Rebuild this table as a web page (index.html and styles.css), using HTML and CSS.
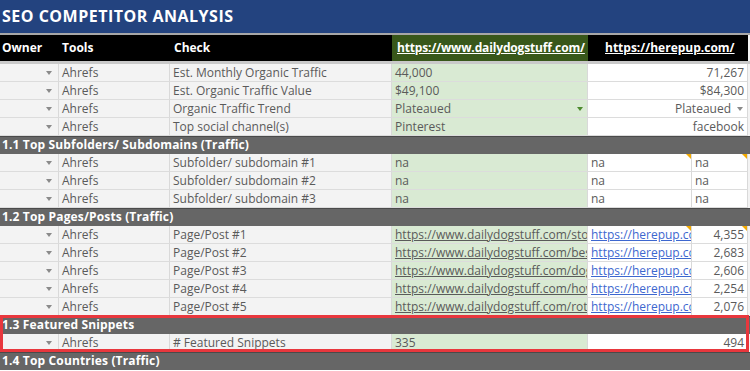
FILE: index.html
```html
<!DOCTYPE html>
<html>
<head>
<meta charset="utf-8">
<link rel="stylesheet" href="styles.css">
</head>
<body>
<div class="sheet">
  <div class="title">SEO COMPETITOR ANALYSIS</div>
  <div class="row head">
    <div class="c ha">Owner</div>
    <div class="c b">Tools</div>
    <div class="c cc">Check</div>
    <div class="c d hd"><span class="ul">https://www.dailydogstuff.com/</span></div>
    <div class="c ef hd"><span class="ul">https://herepup.com/</span></div>
    <div class="c z"></div>
  </div>

  <div class="row">
    <div class="c a gray"><span class="arr"></span></div>
    <div class="c b gray">Ahrefs</div>
    <div class="c cc gray">Est. Monthly Organic Traffic</div>
    <div class="c d green">44,000</div>
    <div class="c ef white right">71,267</div>
    <div class="c z"></div>
  </div>
  <div class="row">
    <div class="c a gray"><span class="arr"></span></div>
    <div class="c b gray">Ahrefs</div>
    <div class="c cc gray">Est. Organic Traffic Value</div>
    <div class="c d green">$49,100</div>
    <div class="c ef white right">$84,300</div>
    <div class="c z"></div>
  </div>
  <div class="row">
    <div class="c a gray"><span class="arr"></span></div>
    <div class="c b gray">Ahrefs</div>
    <div class="c cc gray">Organic Traffic Trend</div>
    <div class="c d green split">Plateaued<span class="arr garr"></span></div>
    <div class="c ef white right">Plateaued<span class="arr sarr"></span></div>
    <div class="c z"></div>
  </div>
  <div class="row">
    <div class="c a gray"><span class="arr"></span></div>
    <div class="c b gray">Ahrefs</div>
    <div class="c cc gray">Top social channel(s)</div>
    <div class="c d green">Pinterest</div>
    <div class="c ef white right">facebook</div>
    <div class="c z"></div>
  </div>

  <div class="section">1.1 Top Subfolders/ Subdomains (Traffic)</div>
  <div class="row">
    <div class="c a gray"><span class="arr"></span></div>
    <div class="c b gray">Ahrefs</div>
    <div class="c cc gray">Subfolder/ subdomain #1</div>
    <div class="c d green">na</div>
    <div class="c e white note">na</div>
    <div class="c f white note">na</div>
    <div class="c z"></div>
  </div>
  <div class="row">
    <div class="c a gray"><span class="arr"></span></div>
    <div class="c b gray">Ahrefs</div>
    <div class="c cc gray">Subfolder/ subdomain #2</div>
    <div class="c d green">na</div>
    <div class="c e white">na</div>
    <div class="c f white">na</div>
    <div class="c z"></div>
  </div>
  <div class="row">
    <div class="c a gray"><span class="arr"></span></div>
    <div class="c b gray">Ahrefs</div>
    <div class="c cc gray">Subfolder/ subdomain #3</div>
    <div class="c d green">na</div>
    <div class="c e white">na</div>
    <div class="c f white">na</div>
    <div class="c z"></div>
  </div>

  <div class="section">1.2 Top Pages/Posts (Traffic)</div>
  <div class="row">
    <div class="c a gray"><span class="arr"></span></div>
    <div class="c b gray">Ahrefs</div>
    <div class="c cc gray">Page/Post #1</div>
    <div class="c d green"><span class="dlink">https://www.dailydogstuff.com/stop-dog-barking/</span></div>
    <div class="c e white note"><span class="blink">https://herepup.com/best-dog-food/</span></div>
    <div class="c f white note right">4,355</div>
    <div class="c z"></div>
  </div>
  <div class="row">
    <div class="c a gray"><span class="arr"></span></div>
    <div class="c b gray">Ahrefs</div>
    <div class="c cc gray">Page/Post #2</div>
    <div class="c d green"><span class="dlink">https://www.dailydogstuff.com/best-dog-beds/</span></div>
    <div class="c e white"><span class="blink">https://herepup.com/dog-names/</span></div>
    <div class="c f white right">2,683</div>
    <div class="c z"></div>
  </div>
  <div class="row">
    <div class="c a gray"><span class="arr"></span></div>
    <div class="c b gray">Ahrefs</div>
    <div class="c cc gray">Page/Post #3</div>
    <div class="c d green"><span class="dlink">https://www.dailydogstuff.com/dog-breeds/</span></div>
    <div class="c e white"><span class="blink">https://herepup.com/puppy-care/</span></div>
    <div class="c f white right">2,606</div>
    <div class="c z"></div>
  </div>
  <div class="row">
    <div class="c a gray"><span class="arr"></span></div>
    <div class="c b gray">Ahrefs</div>
    <div class="c cc gray">Page/Post #4</div>
    <div class="c d green"><span class="dlink">https://www.dailydogstuff.com/how-to-train/</span></div>
    <div class="c e white"><span class="blink">https://herepup.com/dog-toys/</span></div>
    <div class="c f white right">2,254</div>
    <div class="c z"></div>
  </div>
  <div class="row">
    <div class="c a gray"><span class="arr"></span></div>
    <div class="c b gray">Ahrefs</div>
    <div class="c cc gray">Page/Post #5</div>
    <div class="c d green"><span class="dlink">https://www.dailydogstuff.com/rottweiler/</span></div>
    <div class="c e white"><span class="blink">https://herepup.com/dog-health/</span></div>
    <div class="c f white right">2,076</div>
    <div class="c z"></div>
  </div>

  <div class="highlight">
    <div class="section">1.3 Featured Snippets</div>
    <div class="row">
      <div class="c a gray"><span class="arr"></span></div>
      <div class="c b gray">Ahrefs</div>
      <div class="c cc gray"># Featured Snippets</div>
      <div class="c d green">335</div>
      <div class="c ef white right">494</div>
      <div class="c z"></div>
    </div>
  </div>

  <div class="section">1.4 Top Countries (Traffic)</div>
</div>
</body>
</html>
```

FILE: styles.css
```css
* { box-sizing: border-box; }
html, body { margin: 0; padding: 0; background: #ffffff; }
body {
  font-family: "Open Sans", "Liberation Sans", sans-serif;
  font-size: 12px;
  color: #5a5a5a;
  width: 750px;
  height: 371px;
  overflow: hidden;
}
.sheet { width: 750px; }
.title {
  height: 35px;
  background: #23437f;
  border-bottom: 2px solid #a7a7a7;
  color: #ffffff;
  font-weight: 700;
  font-size: 16px;
  padding-left: 2px;
  line-height: 32px;
  letter-spacing: 0.5px;
}
.row {
  display: grid;
  grid-template-columns: 59px 111px 222px 196px 104px 56px 2px;
  height: 18px;
}
.row.head {
  height: 29px;
  background: #000000;
  border-bottom: 3px solid #c9c9c9;
  color: #ffffff;
  font-weight: 700;
}
.c {
  overflow: hidden;
  white-space: nowrap;
  padding-left: 3px;
  line-height: 17px;
  border-right: 1px solid #d9d9d9;
  border-bottom: 1px solid #dcdcdc;
  position: relative;
}
.head .c { line-height: 25px; border: none; padding-left: 2px; }
.head .b { padding-left: 3px; }
.head .cc { padding-left: 4px; }
.head .d { background: #38571a; padding-left: 5px; letter-spacing: -0.15px; }
.head .ef { padding-left: 17px; }
.ul { text-decoration: underline; }
.ef { grid-column: 5 / span 2; }
.a { display: flex; justify-content: flex-end; align-items: center; padding-right: 6px; }
.gray { background: #f3f3f3; }
.green { background: #d9ead3; }
.white { background: #ffffff; }
.z { background: #f3f3f3; border: none; }
.right { text-align: right; padding-right: 3px; }
.arr {
  display: inline-block;
  width: 0; height: 0;
  border-left: 3.5px solid transparent;
  border-right: 3.5px solid transparent;
  border-top: 4px solid #8a8a8a;
}
.split { display: flex; justify-content: space-between; align-items: center; padding-right: 4px; }
.garr { border-top-color: #4d8a2e; }
.sarr { margin-left: 6px; margin-right: 1px; vertical-align: 2px; }
.note::after {
  content: "";
  position: absolute;
  top: 0; right: 0;
  width: 0; height: 0;
  border-top: 5px solid #f2a900;
  border-left: 5px solid transparent;
}
.dlink { text-decoration: underline; color: #5a5a5a; }
.blink { text-decoration: underline; color: #3d67cf; }
.section {
  height: 18px;
  background: #666666;
  border-top: 1px solid #4a4a4a;
  color: #ffffff;
  font-weight: 700;
  line-height: 16px;
  padding-left: 2px;
  white-space: nowrap;
  letter-spacing: 0.15px;
}
.highlight { position: relative; }
.highlight::after {
  content: "";
  position: absolute;
  left: 0; top: -1px; right: 1px; bottom: 0;
  border: 3px solid #e8373d;
  pointer-events: none;
}
```
